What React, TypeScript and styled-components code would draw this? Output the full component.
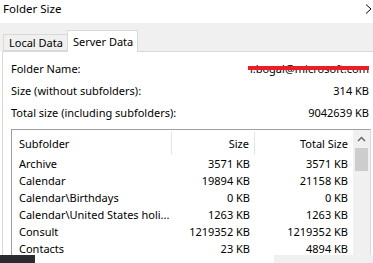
import React from "react";
import styled, { createGlobalStyle } from "styled-components";

const Global = createGlobalStyle`
  html, body { margin: 0; padding: 0; background: #ffffff; overflow: hidden; }
  body { font-family: "Noto Sans", "Segoe UI", sans-serif; font-size: 11px; color: #000; }
`;

const Window = styled.div`
  position: relative;
  width: 373px;
  height: 263px;
  overflow: hidden;
  background: #fff;
  display: flex;
  flex-direction: column;
`;

const TitleBar = styled.div`
  height: 23px;
  flex: none;
  display: flex;
  align-items: center;
  justify-content: space-between;
  padding: 0 1px 0 3px;
  box-sizing: border-box;
`;

const Title = styled.span`
  font-size: 11.5px;
  line-height: 16px;
  margin-top: -5px;
`;

const CloseGlyph = styled.svg`
  width: 7px;
  height: 12px;
  margin-top: -6px;
`;

const TabStrip = styled.div`
  height: 28px;
  flex: none;
  background: #f0f0f0;
  display: flex;
  align-items: flex-end;
  padding-left: 3px;
  box-sizing: border-box;
  position: relative;
  z-index: 1;
`;

const Tab = styled.div<{ $active?: boolean }>`
  box-sizing: border-box;
  height: ${(p) => (p.$active ? 22 : 17)}px;
  margin-bottom: ${(p) => (p.$active ? -1 : 0)}px;
  margin-left: ${(p) => (p.$active ? -1 : 0)}px;
  padding: 0 4px 0 5px;
  background: ${(p) => (p.$active ? "#ffffff" : "#f0f0f0")};
  border: 1px solid #d9d9d9;
  border-bottom: ${(p) => (p.$active ? "none" : "1px solid #d9d9d9")};
  display: flex;
  align-items: center;
  white-space: nowrap;
  line-height: 16px;
  font-size: 11px;
`;

const Panel = styled.div`
  flex: 1;
  margin-left: 2px;
  width: 380px;
  border-top: 1px solid #d9d9d9;
  border-left: 1px solid #d9d9d9;
  padding: 5px 0 0 8px;
  box-sizing: border-box;
`;

const Content = styled.div`
  width: 360px;
  display: flex;
  flex-direction: column;
`;

const InfoRow = styled.div`
  height: 22px;
  display: flex;
  align-items: center;
  justify-content: space-between;
  padding-right: 2px;
`;

const Value = styled.span`
  position: relative;
  white-space: nowrap;
`;

const Redaction = styled.span`
  position: absolute;
  left: -2px;
  right: 0;
  top: 5px;
  height: 4px;
  background: #ec1c24;
`;

const ListBox = styled.div`
  margin-top: 6px;
  border: 1px solid #a0a0a0;
  border-right-color: #d9d9d9;
  display: flex;
  height: 200px;
`;

const Table = styled.div`
  flex: 1;
  display: flex;
  flex-direction: column;
`;

const GridRow = styled.div<{ $header?: boolean }>`
  display: grid;
  grid-template-columns: 160px 83px 1fr;
  height: ${(p) => (p.$header ? 25 : 17)}px;
  align-items: center;
  white-space: nowrap;
`;

const Cell = styled.div<{ $right?: boolean; $header?: boolean; $divider?: boolean }>`
  height: 100%;
  display: flex;
  align-items: center;
  justify-content: ${(p) => (p.$right ? "flex-end" : "flex-start")};
  padding: ${(p) => (p.$right ? "0 5px 0 0" : "0 0 0 7px")};
  box-sizing: border-box;
  border-right: ${(p) => (p.$divider ? "1px solid #e5e5e5" : "none")};
  ${(p) => (p.$header ? "height: 23px; margin-top: 1px;" : "")}
`;

const Scrollbar = styled.div`
  width: 17px;
  flex: none;
  background: #f0f0f0;
  display: flex;
  flex-direction: column;
  align-items: center;
`;

const ArrowBox = styled.div`
  height: 18px;
  width: 17px;
  display: flex;
  align-items: center;
  justify-content: center;
`;

const Thumb = styled.div`
  width: 13px;
  height: 23px;
  background: #cdcdcd;
`;

const TaskbarPiece = styled.div`
  position: absolute;
  left: 0;
  bottom: 0;
  width: 35px;
  height: 8px;
  background: #2a2a30;
`;

const OtherWindowPiece = styled.div`
  position: absolute;
  right: 0;
  bottom: 0;
  width: 99px;
  height: 8px;
  background: #f0f0f0;
`;

const rows: [string, string, string][] = [
  ["Archive", "3571 KB", "3571 KB"],
  ["Calendar", "19894 KB", "21158 KB"],
  ["Calendar\\Birthdays", "0 KB", "0 KB"],
  ["Calendar\\United States holi...", "1263 KB", "1263 KB"],
  ["Consult", "1219352 KB", "1219352 KB"],
  ["Contacts", "23 KB", "4894 KB"],
];

export default function App() {
  return (
    <>
      <Global />
      <Window>
        <TitleBar>
          <Title>Folder Size</Title>
          <CloseGlyph viewBox="0 0 7 12">
            <path d="M1 1.5 L6 6 L1 10.5" fill="none" stroke="#000" strokeWidth="1" />
          </CloseGlyph>
        </TitleBar>
        <TabStrip>
          <Tab>Local Data</Tab>
          <Tab $active>Server Data</Tab>
        </TabStrip>
        <Panel>
          <Content>
            <InfoRow>
              <span>Folder Name:</span>
              <Value>
                r.bogal@microsoft.com
                <Redaction />
              </Value>
            </InfoRow>
            <InfoRow>
              <span>Size (without subfolders):</span>
              <Value>314 KB</Value>
            </InfoRow>
            <InfoRow>
              <span>Total size (including subfolders):</span>
              <Value>9042639 KB</Value>
            </InfoRow>
            <ListBox>
              <Table>
                <GridRow $header>
                  <Cell $header $divider>Subfolder</Cell>
                  <Cell $header $right $divider>Size</Cell>
                  <Cell $header $right>Total Size</Cell>
                </GridRow>
                {rows.map(([name, size, total]) => (
                  <GridRow key={name}>
                    <Cell>{name}</Cell>
                    <Cell $right>{size}</Cell>
                    <Cell $right>{total}</Cell>
                  </GridRow>
                ))}
              </Table>
              <Scrollbar>
                <ArrowBox>
                  <svg width="9" height="6" viewBox="0 0 9 6">
                    <path d="M1 5 L4.5 1.5 L8 5" fill="none" stroke="#606060" strokeWidth="1.3" />
                  </svg>
                </ArrowBox>
                <Thumb />
              </Scrollbar>
            </ListBox>
          </Content>
        </Panel>
        <TaskbarPiece />
        <OtherWindowPiece />
      </Window>
    </>
  );
}
